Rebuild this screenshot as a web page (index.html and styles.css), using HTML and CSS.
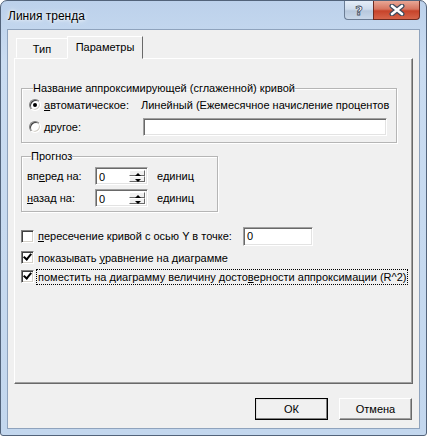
FILE: index.html
```html
<!DOCTYPE html>
<html lang="ru">
<head>
<meta charset="UTF-8">
<title>Линия тренда</title>
<link rel="stylesheet" href="styles.css">
</head>
<body>

<div class="window">
  <div class="titlebar">
    <span class="title">Линия тренда</span>
    <div class="caption-btns">
      <div class="cap help"><span>?</span></div>
      <div class="cap close">
        <svg width="16" height="12" viewBox="0 0 16 12">
          <path d="M3 2 L13 10 M13 2 L3 10" stroke="#3d4a5c" stroke-width="5" stroke-linecap="round"/>
          <path d="M3 2 L13 10 M13 2 L3 10" stroke="#fff" stroke-width="2.6" stroke-linecap="round"/>
        </svg>
      </div>
    </div>
  </div>

  <div class="client">
    <div class="tabs">
      <div class="tab">Тип</div>
      <div class="tab active">Параметры</div>
    </div>

    <div class="panel">
      <fieldset class="group name-group">
        <legend>Название аппроксимирующей (сглаженной) кривой</legend>
        <div class="row">
          <span class="radio checked"></span>
          <span class="lbl"><u>а</u>втоматическое:</span>
          <span class="auto-name">Линейный (Ежемесячное начисление процентов</span>
        </div>
        <div class="row">
          <span class="radio"></span>
          <span class="lbl"><u>д</u>ругое:</span>
          <span class="textbox name-box"></span>
        </div>
      </fieldset>

      <fieldset class="group forecast">
        <legend>Прогноз</legend>
        <div class="row">
          <span class="flbl">вп<u>е</u>ред на:</span>
          <span class="spin"><span class="spin-val">0</span><span class="spin-btns"><i class="up"></i><i class="down"></i></span></span>
          <span class="unit">единиц</span>
        </div>
        <div class="row">
          <span class="flbl"><u>н</u>азад на:</span>
          <span class="spin"><span class="spin-val">0</span><span class="spin-btns"><i class="up"></i><i class="down"></i></span></span>
          <span class="unit">единиц</span>
        </div>
      </fieldset>

      <div class="checks">
        <div class="crow first">
          <span class="check"></span>
          <span class="ctext"><u>п</u>ересечение кривой с осью Y в точке:</span>
          <span class="textbox y-box">0</span>
        </div>
        <div class="crow second">
          <span class="check on"></span>
          <span class="ctext">показывать <u>у</u>равнение на диаграмме</span>
        </div>
        <div class="crow">
          <span class="check on"></span>
          <span class="ctext focus">поместить на диаграмму величину досто<u>в</u>ерности аппроксимации (R^2)</span>
        </div>
      </div>
    </div>

    <div class="buttons">
      <div class="btn default">ОК</div>
      <div class="btn">Отмена</div>
    </div>
  </div>
</div>

</body>
</html>
```

FILE: styles.css
```css
html, body { margin: 0; padding: 0; }
body { font-family: "Liberation Sans", Arial, sans-serif; font-size: 11px; color: #000; background: #fff; }

.window { width: 427px; height: 436px; box-sizing: border-box; border: 1px solid #52637a; border-radius: 7px 7px 3px 3px; background: linear-gradient(#bcd1eb, #cadcf1 60px, #c3d7ee); padding: 0 6px 6px; display: flex; flex-direction: column; }
.titlebar { height: 28px; flex: none; display: flex; justify-content: space-between; align-items: flex-start; }
.title { font-size: 12px; margin: 8px 0 0 1px; text-shadow: 0 0 6px #fff, 0 0 3px #fff; }
.caption-btns { display: flex; }
.cap { height: 19px; box-sizing: border-box; display: flex; align-items: center; justify-content: center; }
.help { width: 29px; border: 1px solid #6b7d95; border-top: none; border-right: none; border-radius: 0 0 0 4px; background: linear-gradient(#e4edf8, #cfdcec 45%, #b7c8dd 55%, #c9d8ea); }
.help span { font-family: "DejaVu Sans", sans-serif; font-weight: bold; font-size: 13px; color: #fff; -webkit-text-stroke: 0.8px #3d4a5c; line-height: 1; }
.close { width: 47px; border: 1px solid #6e2b21; border-top: none; border-radius: 0 0 4px 0; background: linear-gradient(#e8a795, #d67560 45%, #c7432a 55%, #d6644a); }

.client { flex: 1; background: #f0f0f0; border: 1px solid #8fa3bd; padding: 6px 6px 0; display: flex; flex-direction: column; }

.tabs { height: 22px; display: flex; align-items: flex-end; padding-left: 2px; }
.tab { height: 20px; box-sizing: border-box; border: 1px solid; border-color: #fff #a0a0a0 transparent #fff; display: flex; align-items: center; justify-content: center; padding-top: 2px; }
.tab:first-child { width: 51px; border-right: none; }
.tab.active { width: 76px; height: 23px; margin-bottom: -1px; position: relative; z-index: 1; background: #f0f0f0; border-right-color: #696969; padding-top: 0; padding-bottom: 1px; }

.panel { height: 326px; box-sizing: border-box; border: 1px solid; border-color: #fff #696969 #696969 #fff; box-shadow: inset -1px -1px 0 #a0a0a0; padding: 23px 0 0 6px; }

.group { margin: 0; padding: 0 0 4px 7px; border: 1px solid #b5b5b5; box-shadow: 1px 1px 0 #fff, inset 1px 1px 0 #fff; }
.group legend { padding: 0; margin-left: 4px; line-height: 13px; }
.name-group { width: 376px; box-sizing: border-box; }
.forecast { width: 197px; box-sizing: border-box; margin-top: 7px; padding: 2px 0 2px 5px; }

.row { height: 22px; display: flex; align-items: center; }
.name-group .row:first-of-type { margin-top: -1px; }
.radio { width: 12px; height: 12px; box-sizing: border-box; border-radius: 50%; border: 1px solid; border-color: #808080 #fff #fff #808080; background: #fff; box-shadow: inset 1px 1px 0 #404040, inset -1px -1px 0 #d4d0c8; margin-right: 3px; position: relative; }
.radio.checked::after { content: ""; position: absolute; left: 3px; top: 3px; width: 4px; height: 4px; border-radius: 50%; background: #000; }
.lbl { width: 97px; }
.auto-name { white-space: nowrap; }
.textbox { display: flex; align-items: center; box-sizing: border-box; height: 18px; background: #fff; border: 1px solid; border-color: #a0a0a0 #fff #fff #a0a0a0; box-shadow: inset 1px 1px 0 #696969, inset -1px -1px 0 #e3e3e3; padding-left: 3px; }
.name-box { width: 244px; margin-left: 2px; }

.flbl { width: 68px; }
.spin { width: 53px; height: 18px; box-sizing: border-box; display: flex; background: #fff; border: 1px solid; border-color: #a0a0a0 #fff #fff #a0a0a0; box-shadow: inset 1px 1px 0 #696969, inset -1px -1px 0 #e3e3e3; padding: 2px 2px 2px 3px; }
.spin-val { flex: 1; line-height: 14px; }
.spin-btns { width: 16px; display: flex; flex-direction: column; }
.spin-btns i { flex: 1; background: #f0f0f0; border: 1px solid; border-color: #fff #696969 #696969 #fff; position: relative; }
.spin-btns i::after { content: ""; position: absolute; left: 5px; border-left: 3px solid transparent; border-right: 3px solid transparent; }
.spin-btns .up::after { top: 2px; border-bottom: 3px solid #000; }
.spin-btns .down::after { top: 2px; border-top: 3px solid #000; }
.unit { margin-left: 9px; }

.checks { margin-top: 13px; }
.crow { height: 19px; display: flex; align-items: center; }
.crow.first { height: 22px; }
.crow.second { height: 19px; margin-top: 1px; }
.check { width: 13px; height: 13px; box-sizing: border-box; background: #fff; border: 1px solid; border-color: #808080 #fff #fff #808080; box-shadow: inset 1px 1px 0 #404040, inset -1px -1px 0 #d4d0c8; margin-right: 3px; position: relative; }
.check.on::after { content: ""; position: absolute; left: 3px; top: 0; width: 3px; height: 6px; border: solid #000; border-width: 0 2px 2px 0; transform: rotate(40deg); }
.ctext { padding: 1px 1px; }
.ctext.focus { outline: 1px dotted #000; outline-offset: 0; }
.y-box { width: 70px; height: 19px; margin-left: 10px; }

.buttons { display: flex; justify-content: flex-end; gap: 11px; margin: 14px 1px 0 0; }
.btn { width: 73px; height: 22px; box-sizing: border-box; display: flex; align-items: center; justify-content: center; background: #f0f0f0; border: 1px solid; border-color: #fff #696969 #696969 #fff; box-shadow: inset -1px -1px 0 #a0a0a0; }
.btn.default { outline: 1px solid #000; outline-offset: -1px; border-color: #fff #404040 #404040 #fff; box-shadow: inset -1px -1px 0 #808080, inset 1px 1px 0 #e0e0e0; }
```
